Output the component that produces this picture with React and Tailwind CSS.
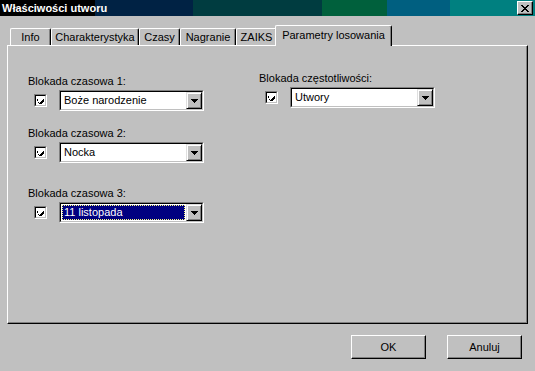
import React from 'react';

const tabs = [
  { label: 'Info', w: 'w-[41px]' },
  { label: 'Charakterystyka', w: 'w-[88px]' },
  { label: 'Czasy', w: 'w-[41px]' },
  { label: 'Nagranie', w: 'w-[56px]' },
  { label: 'ZAIKS', w: 'w-[41px]' },
];

const Check = () => (
  <div className="w-[13px] h-[13px] border border-t-[#808080] border-l-[#808080] border-r-white border-b-white">
    <div className="w-full h-full bg-white border border-t-black border-l-black border-r-[#c0c0c0] border-b-[#c0c0c0] flex items-center justify-center">
      <svg width="7" height="7" viewBox="0 0 7 7" shapeRendering="crispEdges">
        <path d="M0 2h1v3h1v1h1v-1h1v-1h1v-1h1v-1h1v3h-1v1h-1v1h-1v1h-1v-1h-1v-1h-1z" fill="#000" />
      </svg>
    </div>
  </div>
);

const Combo = ({ value, focused }) => (
  <div className="w-[145px] h-[21px] border border-t-[#808080] border-l-[#808080] border-r-white border-b-white">
    <div className="w-full h-full bg-white border border-t-black border-l-black border-r-[#c0c0c0] border-b-[#c0c0c0] flex">
      <div className="flex-1 flex items-center pl-[1px] pr-[1px]">
        {focused ? (
          <div className="w-full h-[15px] bg-[#000080] text-white border border-dotted border-[#ffff80] flex items-center pl-[1px] leading-[13px]">
            {value}
          </div>
        ) : (
          <div className="pl-[2px] leading-[13px] text-black">{value}</div>
        )}
      </div>
      <div className="w-[16px] h-full bg-[#c0c0c0] border border-t-[#dfdfdf] border-l-[#dfdfdf] border-r-black border-b-black shadow-[inset_1px_1px_white,inset_-1px_-1px_#808080] flex items-center justify-center">
        <svg width="7" height="4" viewBox="0 0 7 4" shapeRendering="crispEdges">
          <path d="M0 0h7v1h-1v1h-1v1h-1v1h-1v-1h-1v-1h-1v-1h-1z" fill="#000" />
        </svg>
      </div>
    </div>
  </div>
);

const Field = ({ label, value, focused, className }) => (
  <div className={className}>
    <div className="leading-[13px] h-[13px] whitespace-nowrap">{label}</div>
    <div className="mt-[2px] flex items-center pl-[6px] gap-[12px]">
      <Check />
      <Combo value={value} focused={focused} />
    </div>
  </div>
);

const Button = ({ children }) => (
  <button className="w-[75px] h-[24px] bg-[#c0c0c0] border border-t-white border-l-white border-r-black border-b-black shadow-[inset_-1px_-1px_#808080] text-black leading-[13px] flex items-center justify-center">
    {children}
  </button>
);

export default function App() {
  return (
    <div className="w-[535px] h-[371px] bg-[#c0c0c0] overflow-hidden font-['Liberation_Sans',Arial,sans-serif] text-[11px] text-black">
      <div className="h-[16px] flex items-center bg-[linear-gradient(to_right,#000000_0px,#000000_95px,#002244_95px,#002244_193px,#003c40_193px,#003c40_322px,#00603c_322px,#00603c_387px,#005f80_387px,#005f80_450px,#008080_450px)]">
        <span className="pl-[2px] text-white font-bold leading-[13px]">Właściwości utworu</span>
        <div className="ml-auto mr-[2px] w-[16px] h-[14px] bg-[#c0c0c0] border border-t-white border-l-white border-r-black border-b-black shadow-[inset_-1px_-1px_#808080] flex items-center justify-center">
          <svg width="8" height="7" viewBox="0 0 8 7" shapeRendering="crispEdges">
            <path d="M0 0h2v1h1v1h2v-1h1v-1h2v1h-1v1h-1v1h-1v1h1v1h1v1h1v1h-2v-1h-1v-1h-2v1h-1v1h-2v-1h1v-1h1v-1h1v-1h-1v-1h-1v-1h-1z" fill="#000" />
          </svg>
        </div>
      </div>

      <div className="px-[7px]">
        <div className="h-[29px] flex items-end pl-[3px]">
          {tabs.map((t) => (
            <div
              key={t.label}
              className={`${t.w} h-[17px] border-t border-l border-r border-t-white border-l-white border-r-black shadow-[inset_-1px_0_#808080] rounded-tl-[2px] rounded-tr-[2px] flex items-center justify-center leading-[13px] whitespace-nowrap`}
            >
              {t.label}
            </div>
          ))}
          <div className="relative z-10 -ml-[2px] -mb-[1px] w-[117px] h-[21px] bg-[#c0c0c0] border-t border-l border-r border-t-white border-l-white border-r-black shadow-[inset_-1px_0_#808080] rounded-tl-[2px] rounded-tr-[2px] flex items-start justify-center pt-[3px] leading-[13px] whitespace-nowrap">
            Parametry losowania
          </div>
        </div>

        <div className="h-[279px] border border-t-white border-l-white border-r-black border-b-black shadow-[inset_-1px_-1px_#808080] flex pt-[29px] pl-[20px]">
          <div className="w-[231px]">
            <Field label="Blokada czasowa 1:" value="Boże narodzenie" />
            <Field className="mt-[16px]" label="Blokada czasowa 2:" value="Nocka" />
            <Field className="mt-[24px]" label="Blokada czasowa 3:" value="11 listopada" focused />
          </div>
          <div className="-mt-[3px]">
            <Field label="Blokada częstotliwości:" value="Utwory" />
          </div>
        </div>

        <div className="mt-[11px] flex justify-end gap-[21px] pr-[6px]">
          <Button>OK</Button>
          <Button>Anuluj</Button>
        </div>
      </div>
    </div>
  );
}
